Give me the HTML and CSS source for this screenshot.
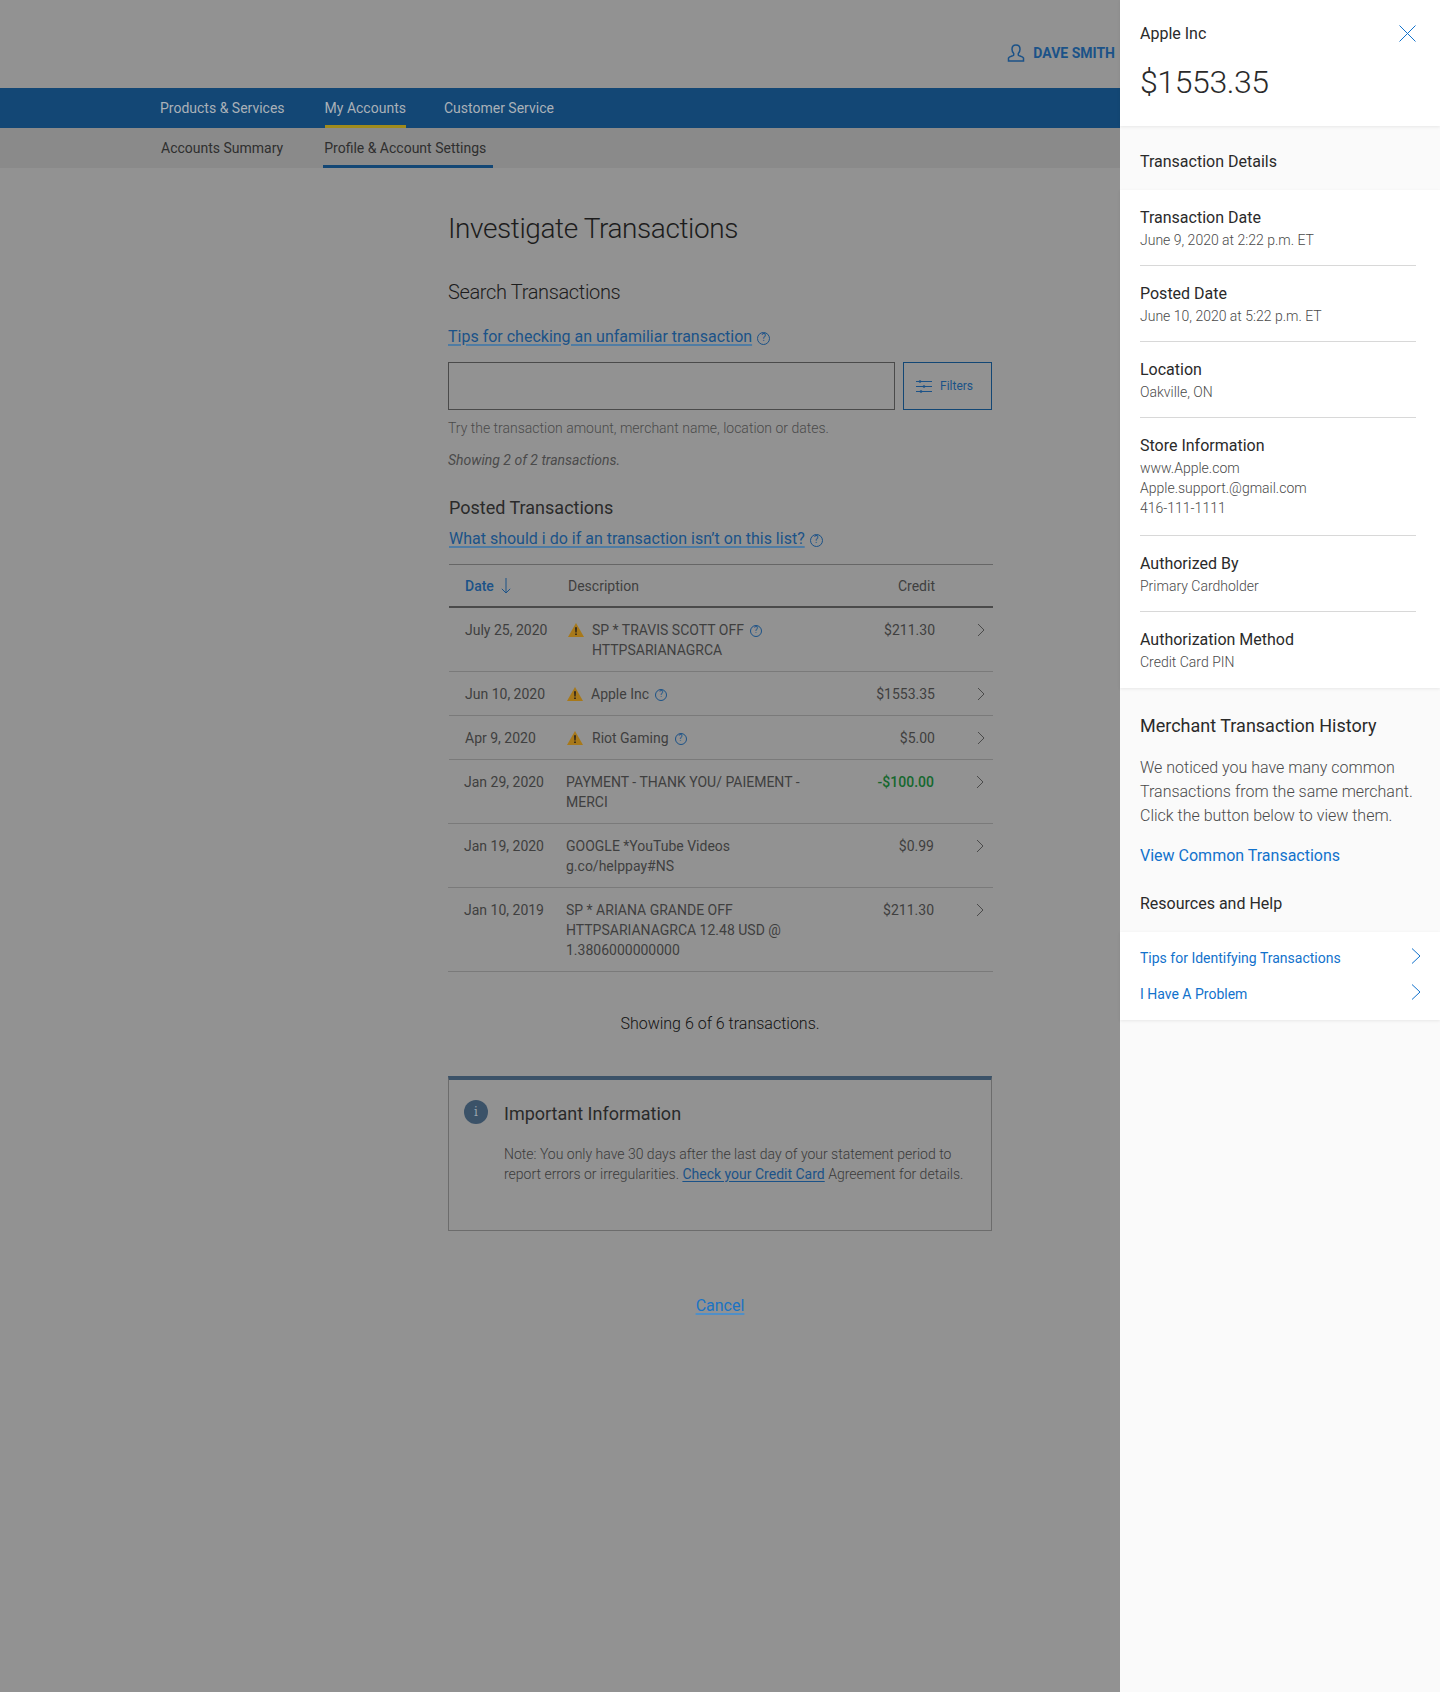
FILE: index.html
```html
<!DOCTYPE html>
<html lang="en">
<head>
<meta charset="utf-8">
<title>Investigate Transactions</title>
<link rel="stylesheet" href="styles.css">
</head>
<body>
<svg class="defs" width="0" height="0" aria-hidden="true">
  <symbol id="warn" viewBox="0 0 16 14"><path d="M8 0 16 14H0Z" fill="#a8791a"/><path d="M7 4.300h2l-.3 5.200H7.300zM7.100 10.400h1.800V12H7.100z" fill="#33291a"/></symbol>
  <symbol id="chev" viewBox="0 0 8 14"><path d="M1 1l6 6-6 6" fill="none" stroke="#4a4a4a" stroke-width="1"/></symbol>
  <symbol id="chev-blue" viewBox="0 0 10 16"><path d="M1 .5 9 8l-8 7.500" fill="none" stroke="#1272cc" stroke-width="1"/></symbol>
</svg>
<div class="page">
  <main class="main">
    <header class="top">
      <svg class="user-icon" viewBox="0 0 18 18" width="18" height="18"><path d="M9 1c2.500 0 4 1.800 4 4.200 0 1.700-.7 3.300-1.700 4.300v1.700c0 .7 4.700 1.200 5.200 2.800V17h-15v-3c.5-1.600 5.200-2.100 5.200-2.800V9.500C5.700 8.500 5 6.900 5 5.200 5 2.800 6.500 1 9 1Z" fill="none" stroke="#1b5288" stroke-width="1.500"/></svg>
      <span class="user-name">DAVE SMITH</span>
    </header>
    <nav class="nav">
      <a class="nav-item nav-products">Products &amp; Services</a>
      <a class="nav-item nav-accounts">My Accounts</a>
      <a class="nav-item">Customer Service</a>
    </nav>
    <nav class="subnav">
      <a class="sub-item sub-summary">Accounts Summary</a>
      <a class="sub-item sub-active">Profile &amp; Account Settings</a>
    </nav>
    <section class="content">
      <h1 class="title">Investigate Transactions</h1>
      <h2 class="search-title">Search Transactions</h2>
      <p class="tip-line"><a class="link link-strong">Tips for checking an unfamiliar transaction</a><span class="help">?</span></p>
      <div class="search-row">
        <div class="search-input"></div>
        <button class="filters">
          <svg viewBox="0 0 16 13" width="16" height="13"><path d="M0 1.500h16M0 6.500h16M0 11.500h16" stroke="#1b5288" stroke-width="1"/><circle cx="4" cy="1.500" r="1.300" fill="#1b5288"/><circle cx="8" cy="6.500" r="1.300" fill="#1b5288"/><circle cx="5" cy="11.500" r="1.300" fill="#1b5288"/></svg>
          <span>Filters</span>
        </button>
      </div>
      <p class="hint">Try the transaction amount, merchant name, location or dates.</p>
      <p class="showing">Showing 2 of 2 transactions.</p>
      <h3 class="posted">Posted Transactions</h3>
      <p class="what"><a class="link link-strong">What should i do if an transaction isn’t on this list?</a><span class="help">?</span></p>

      <div class="table">
        <div class="thead">
          <span class="th-date">Date <svg viewBox="0 0 10 16" width="10" height="16"><path d="M5 0v15M.8 10.800 5 15l4.200-4.200" fill="none" stroke="#1b5288" stroke-width="1"/></svg></span>
          <span>Description</span>
          <span class="credit">Credit</span>
        </div>
        <div class="row">
          <span>July 25, 2020</span>
          <div class="desc"><svg class="warn"><use href="#warn"/></svg><span>SP * TRAVIS SCOTT OFF<span class="help help-row">?</span><br>HTTPSARIANAGRCA</span></div>
          <span class="credit">$211.30</span>
          <svg class="chev"><use href="#chev"/></svg>
        </div>
        <div class="row">
          <span>Jun 10, 2020</span>
          <div class="desc desc-tight"><svg class="warn"><use href="#warn"/></svg><span>Apple Inc<span class="help help-row">?</span></span></div>
          <span class="credit">$1553.35</span>
          <svg class="chev"><use href="#chev"/></svg>
        </div>
        <div class="row">
          <span>Apr 9, 2020</span>
          <div class="desc desc-shift"><svg class="warn"><use href="#warn"/></svg><span>Riot Gaming<span class="help help-row">?</span></span></div>
          <span class="credit">$5.00</span>
          <svg class="chev"><use href="#chev"/></svg>
        </div>
        <div class="row row-alt">
          <span>Jan 29, 2020</span>
          <div class="desc"><span>PAYMENT - THANK YOU/ PAIEMENT - MERCI</span></div>
          <span class="credit positive">-$100.00</span>
          <svg class="chev"><use href="#chev"/></svg>
        </div>
        <div class="row row-alt">
          <span>Jan 19, 2020</span>
          <div class="desc"><span>GOOGLE *YouTube Videos<br>g.co/helppay#NS</span></div>
          <span class="credit">$0.99</span>
          <svg class="chev"><use href="#chev"/></svg>
        </div>
        <div class="row row-alt">
          <span>Jan 10, 2019</span>
          <div class="desc"><span>SP * ARIANA GRANDE OFF HTTPSARIANAGRCA 12.48 USD @ 1.3806000000000</span></div>
          <span class="credit">$211.30</span>
          <svg class="chev"><use href="#chev"/></svg>
        </div>
      </div>

      <p class="summary">Showing 6 of 6 transactions.</p>

      <div class="info">
        <span class="info-icon">i</span>
        <div class="info-body">
          <h4 class="info-title">Important Information</h4>
          <p class="info-text">Note: You only have 30 days after the last day of your statement period to report errors or irregularities. <a class="link info-link">Check your Credit Card</a> Agreement for details.</p>
        </div>
      </div>

      <p class="cancel"><a>Cancel</a></p>
    </section>
  </main>

  <aside class="panel">
    <div class="panel-head">
      <div class="panel-head-row">
        <span class="merchant">Apple Inc</span>
        <svg class="close" viewBox="0 0 17 17" width="17" height="17"><path d="M.5.500l16 16M16.500.500l-16 16" stroke="#1272cc" stroke-width="1" fill="none"/></svg>
      </div>
      <div class="amount">$1553.35</div>
    </div>
    <h2 class="panel-section">Transaction Details</h2>
    <div class="details">
      <div class="item"><div class="label">Transaction Date</div><div class="value">June 9, 2020 at 2:22 p.m. ET</div></div>
      <div class="item"><div class="label">Posted Date</div><div class="value">June 10, 2020 at 5:22 p.m. ET</div></div>
      <div class="item"><div class="label">Location</div><div class="value">Oakville, ON</div></div>
      <div class="item item-store"><div class="label">Store Information</div><div class="value">www.Apple.com<br>Apple.support.@gmail.com<br>416-111-1111</div></div>
      <div class="item"><div class="label">Authorized By</div><div class="value">Primary Cardholder</div></div>
      <div class="item"><div class="label">Authorization Method</div><div class="value">Credit Card PIN</div></div>
    </div>
    <div class="history">
      <h2 class="history-title">Merchant Transaction History</h2>
      <p class="history-text">We noticed you have many common Transactions from the same merchant. Click the button below to view them.</p>
      <a class="history-link">View Common Transactions</a>
      <h2 class="resources-title">Resources and Help</h2>
    </div>
    <div class="resources">
      <a class="res-link">Tips for Identifying Transactions<svg class="res-chev"><use href="#chev-blue"/></svg></a>
      <a class="res-link">I Have A Problem<svg class="res-chev"><use href="#chev-blue"/></svg></a>
    </div>
  </aside>
</div>
</body>
</html>
```
FILE: styles.css
```css
* { box-sizing: border-box; }
html, body { margin: 0; padding: 0; }
body { font-family: Roboto, "Liberation Sans", sans-serif; font-size: 14px; color: #333; background: #929292; }
h1, h2, h3, h4, p { margin: 0; font-weight: 400; }
.defs { position: absolute; }
.page { display: flex; min-height: 1692px; }
.main { flex: 1; min-width: 0; }

.top { height: 88px; display: flex; align-items: center; justify-content: flex-end; padding: 18px 5px 0 0; }
.user-icon { margin-right: 8px; }
.user-name { font-size: 14px; font-weight: 700; color: #1b5288; }

.nav { height: 40px; background: #134775; display: flex; padding-left: 160px; }
.nav-item { display: flex; align-items: center; color: #aab1b8; font-size: 14px; border-bottom: 3px solid transparent; padding-top: 3px; }
.nav-products { margin-right: 40px; }
.nav-accounts { margin-right: 38px; border-bottom-color: #a08b1c; }

.subnav { height: 40px; background: #8a8a8a; display: flex; padding-left: 161px; }
.sub-item { display: flex; align-items: center; color: #2f2f2f; font-size: 14px; border-bottom: 3px solid transparent; padding-top: 3px; }
.sub-summary { margin-right: 40px; }
.sub-active { border-bottom-color: #134775; padding-left: 1px; padding-right: 7px; }

.content { width: 544px; margin-left: 448px; }
.title { font-size: 28px; font-weight: 300; letter-spacing: -.4px; line-height: 36px; color: #1c1c1c; padding-top: 43px; box-sizing: content-box; }
.search-title { font-size: 20px; font-weight: 300; letter-spacing: -.35px; line-height: 28px; color: #1c1c1c; margin-top: 31px; }
.tip-line { font-size: 16px; line-height: 24px; margin-top: 19px; }
.link { color: #1b5288; text-decoration: underline; text-underline-offset: 2px; }
.link-strong { text-decoration-thickness: 2px; text-decoration-color: #4f7ca4; }
.info-link { font-weight: 400; }
.help { display: inline-flex; align-items: center; justify-content: center; width: 13px; height: 13px; margin-left: 5px; border: 1px solid #1b5288; border-radius: 50%; font-size: 10px; line-height: 1; color: #1b5288; vertical-align: 1px; }
.search-row { display: flex; gap: 8px; height: 48px; margin-top: 13px; }
.search-input { flex: 1; border: 1px solid #4a4a4a; }
.filters { width: 89px; display: flex; align-items: center; gap: 8px; padding: 0 0 0 12px; background: none; border: 1px solid #134775; font: 12px Roboto, sans-serif; color: #1b5288; }
.hint { line-height: 20px; margin-top: 8px; font-weight: 300; color: #4a4a4a; }
.showing { line-height: 20px; margin-top: 12px; font-style: italic; color: #4a4a4a; }
.posted { font-size: 18px; line-height: 24px; margin-top: 26px; margin-left: 1px; color: #2a2a2a; }
.what { font-size: 16px; line-height: 24px; margin-top: 7px; margin-left: 1px; }

.table { margin-top: 13px; margin-left: 1px; width: 544px; border-top: 1px solid #666; color: #3f3f3f; }
.thead { display: grid; grid-template-columns: 103px 240px 127px; height: 43px; align-items: center; padding-left: 16px; border-bottom: 2px solid #4a4a4a; }
.th-date { display: flex; align-items: center; gap: 7px; color: #1b5288; font-weight: 500; }
.row { display: grid; grid-template-columns: 103px 240px 127px 42px 8px; padding: 12px 0 11px 16px; line-height: 20px; border-bottom: 1px solid #7a7a7a; }
.row-alt { margin-left: -1px; }
.row-alt .desc { margin-left: -1px; }
.desc { display: flex; gap: 8px; }
.desc-tight { margin-left: -1px; gap: 8px; }
.desc-shift { margin-left: -1px; gap: 9px; }
.warn { width: 16px; height: 14px; flex: none; margin-top: 3px; }
.credit { text-align: right; }
.positive { color: #15682e; font-weight: 500; }
.chev { grid-column: 5; width: 8px; height: 14px; margin-top: 3px; }
.help-row { width: 12px; height: 12px; margin-left: 6px; font-size: 9px; vertical-align: 2px; }

.summary { font-size: 16px; font-weight: 300; line-height: 24px; text-align: center; margin-top: 40px; color: #111; }

.info { height: 155px; margin-top: 40px; border: 1px solid #6c6c6c; border-top: 4px solid #3b5268; padding: 20px 15px; display: flex; gap: 16px; }
.info-icon { flex: none; width: 24px; height: 24px; border-radius: 50%; background: #3b5268; color: #9aa4ad; font: 12px/24px "DejaVu Serif", serif; text-align: center; }
.info-title { font-size: 18px; line-height: 26px; margin-top: 1px; color: #2a2a2a; }
.info-text { margin-top: 17px; line-height: 20px; font-weight: 300; color: #3a3a3a; }
.cancel { font-size: 16px; line-height: 24px; text-align: center; margin-top: 63px; color: #1a73c4; text-decoration: underline; text-decoration-thickness: 2px; text-decoration-color: #4f8fc8; text-underline-offset: 2px; }

.panel { flex: none; width: 320px; background: #fafafa; color: #2a2a2a; }
.panel-head { height: 126px; background: #fff; padding: 21px 20px 0; box-shadow: 0 1px 3px rgba(0,0,0,.08); position: relative; }
.panel-head-row { display: flex; justify-content: space-between; align-items: center; height: 24px; padding-right: 4px; }
.merchant { font-size: 16px; }
.amount { font-size: 32px; font-weight: 300; letter-spacing: -.4px; line-height: 40px; margin-top: 17px; }
.panel-section { height: 64px; padding: 0 20px; font-size: 16px; line-height: 72px; }
.details { background: #fff; padding: 0 24px 0 20px; height: 498px; box-shadow: 0 1px 3px rgba(0,0,0,.08); position: relative; }
.item { padding: 17px 0 15px; border-bottom: 1px solid #d8d8d8; }
.item-store { padding-bottom: 17px; }
.item:last-child { border-bottom: 0; }
.label { font-size: 16px; line-height: 22px; }
.value { margin-top: 1px; line-height: 20px; font-weight: 300; color: #4a4a4a; }
.history { height: 244px; padding: 26px 20px 0; }
.history-title { font-size: 18px; line-height: 24px; }
.history-text { font-size: 16px; line-height: 24px; font-weight: 300; color: #4a4a4a; margin-top: 18px; }
.history-link { display: block; font-size: 16px; line-height: 24px; color: #1272cc; margin-top: 16px; }
.resources-title { font-size: 16px; line-height: 24px; margin-top: 24px; }
.resources { height: 88px; background: #fff; padding: 8px 20px 0; box-shadow: 0 1px 3px rgba(0,0,0,.08); }
.res-link { display: flex; justify-content: space-between; align-items: center; height: 36px; color: #1272cc; font-size: 14px; }
.res-chev { width: 10px; height: 16px; margin-top: -5px; margin-right: -1px; }
```
